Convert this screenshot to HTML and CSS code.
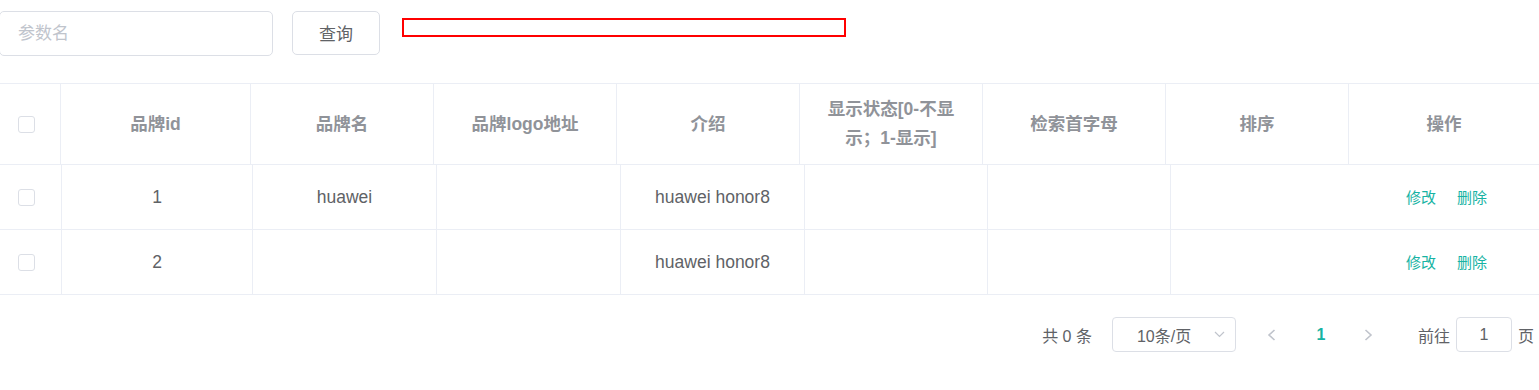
FILE: index.html
```html
<!DOCTYPE html>
<html lang="zh-CN">
<head>
    <meta charset="UTF-8">
    <meta name="viewport" content="width=device-width, initial-scale=1.0">
    <title>品牌管理</title>
    <link rel="stylesheet" href="styles.css">
</head>
<body>
    <div class="page">
        <!-- 搜索栏 -->
        <div class="search-bar">
            <input class="search-input" type="text" placeholder="参数名">
            <button class="btn">查询</button>
            <div class="red-box"></div>
        </div>

        <!-- 表格 -->
        <div class="table-wrap">
            <table class="table-head">
                <colgroup>
                    <col style="width: 61px;">
                    <col style="width: 190px;">
                    <col style="width: 183px;">
                    <col style="width: 183px;">
                    <col style="width: 183px;">
                    <col style="width: 183px;">
                    <col style="width: 183px;">
                    <col style="width: 183px;">
                    <col>
                </colgroup>
                <thead>
                    <tr>
                        <th class="col-check"><span class="checkbox"></span></th>
                        <th>品牌id</th>
                        <th>品牌名</th>
                        <th>品牌logo地址</th>
                        <th>介绍</th>
                        <th>显示状态[0-不显示；1-显示]</th>
                        <th>检索首字母</th>
                        <th>排序</th>
                        <th class="col-last">操作</th>
                    </tr>
                </thead>
            </table>
            <table class="table-body">
                <colgroup>
                    <col style="width: 62px;">
                    <col style="width: 191px;">
                    <col style="width: 184px;">
                    <col style="width: 184px;">
                    <col style="width: 184px;">
                    <col style="width: 183px;">
                    <col style="width: 183px;">
                    <col style="width: 183px;">
                    <col>
                </colgroup>
                <tbody>
                    <tr>
                        <td class="col-check"><span class="checkbox"></span></td>
                        <td>1</td>
                        <td>huawei</td>
                        <td></td>
                        <td>huawei honor8</td>
                        <td></td>
                        <td></td>
                        <td class="col-last"></td>
                        <td class="col-last">
                            <a class="link">修改</a>
                            <a class="link">删除</a>
                        </td>
                    </tr>
                    <tr>
                        <td class="col-check"><span class="checkbox"></span></td>
                        <td>2</td>
                        <td></td>
                        <td></td>
                        <td>huawei honor8</td>
                        <td></td>
                        <td></td>
                        <td class="col-last"></td>
                        <td class="col-last">
                            <a class="link">修改</a>
                            <a class="link">删除</a>
                        </td>
                    </tr>
                </tbody>
            </table>
        </div>

        <!-- 分页 -->
        <div class="pagination">
            <span class="total">共 0 条</span>
            <div class="size-select">
                <span>10条/页</span>
                <svg class="arrow-down" width="11" height="7" viewBox="0 0 11 7">
                    <path d="M1 1 L5.5 5.5 L10 1" fill="none" stroke="#c0c4cc" stroke-width="1.2"/>
                </svg>
            </div>
            <button class="btn-page btn-prev">
                <svg width="9" height="12" viewBox="0 0 9 12">
                    <path d="M7.5 1 L2 6 L7.5 11" fill="none" stroke="#c0c4cc" stroke-width="1.6"/>
                </svg>
            </button>
            <span class="pager active">1</span>
            <button class="btn-page btn-next">
                <svg width="9" height="12" viewBox="0 0 9 12">
                    <path d="M1.5 1 L7 6 L1.5 11" fill="none" stroke="#c0c4cc" stroke-width="1.6"/>
                </svg>
            </button>
            <span class="jumper">
                前往
                <input class="jump-input" type="text" value="1">
                页
            </span>
        </div>
    </div>
</body>
</html>
```

FILE: styles.css
```css
* {
    margin: 0;
    padding: 0;
    box-sizing: border-box;
    font-family: "Liberation Sans", "Noto Sans CJK SC", sans-serif;
}

body {
    background-color: #fff;
    color: #606266;
}

.page {
    padding-top: 11px;
}

/* 搜索栏 */
.search-bar {
    display: flex;
    align-items: flex-start;
}

.search-input {
    width: 274px;
    height: 45px;
    margin-left: -1px;
    padding: 0 18px;
    border: 1px solid #dcdfe6;
    border-radius: 5px;
    font-size: 17px;
    color: #606266;
    outline: none;
}

.search-input::placeholder {
    color: #c0c4cc;
}

.btn {
    margin-left: 19px;
    width: 88px;
    height: 44px;
    padding-bottom: 2px;
    background-color: #fff;
    border: 1px solid #dcdfe6;
    border-radius: 5px;
    font-size: 17px;
    color: #606266;
    cursor: pointer;
}

.red-box {
    margin-left: 22px;
    margin-top: 7px;
    width: 444px;
    height: 19px;
    border: 2px solid #ff0000;
}

/* 表格 */
.table-wrap {
    margin-top: 27px;
}

table {
    width: 100%;
    table-layout: fixed;
    border-collapse: separate;
    border-spacing: 0;
}

.table-head {
    border-top: 1px solid #ebeef5;
}

th, td {
    border-right: 1px solid #ebeef5;
    border-bottom: 1px solid #ebeef5;
    text-align: center;
    vertical-align: middle;
    font-size: 17.5px;
    padding: 0 14px;
}

th {
    height: 81px;
    color: #909399;
    font-weight: bold;
    line-height: 29px;
}

td {
    height: 65px;
    color: #606266;
}

th.col-last, td.col-last {
    border-right: none;
}

.col-check {
    text-align: left;
    padding-left: 18px;
}

.checkbox {
    display: inline-block;
    width: 17px;
    height: 17px;
    border: 1px solid #dcdfe6;
    border-radius: 3px;
    vertical-align: middle;
}

.link {
    font-size: 15px;
    color: #17b3a3;
    cursor: pointer;
    margin: 0 8px;
}

/* 分页 */
.pagination {
    margin-top: 22px;
    display: flex;
    align-items: center;
    justify-content: flex-end;
    padding-right: 5px;
    font-size: 16px;
    height: 35px;
}

.total {
    margin-right: 20px;
}

.size-select {
    width: 124px;
    height: 35px;
    border: 1px solid #dcdfe6;
    border-radius: 4px;
    display: flex;
    align-items: center;
    justify-content: space-between;
    padding: 0 10px 0 24px;
}

.btn-page {
    background: none;
    border: none;
    height: 35px;
    display: flex;
    align-items: center;
    justify-content: center;
}

.btn-prev {
    margin-left: 12px;
    width: 48px;
}

.btn-next {
    width: 46px;
}

.pager {
    width: 50px;
    text-align: center;
    font-weight: bold;
}

.pager.active {
    color: #17b3a3;
}

.jumper {
    margin-left: 26px;
    display: flex;
    align-items: center;
}

.jump-input {
    width: 56px;
    height: 35px;
    margin: 0 6px;
    border: 1px solid #dcdfe6;
    border-radius: 4px;
    text-align: center;
    font-size: 16px;
    color: #606266;
    outline: none;
}
```
